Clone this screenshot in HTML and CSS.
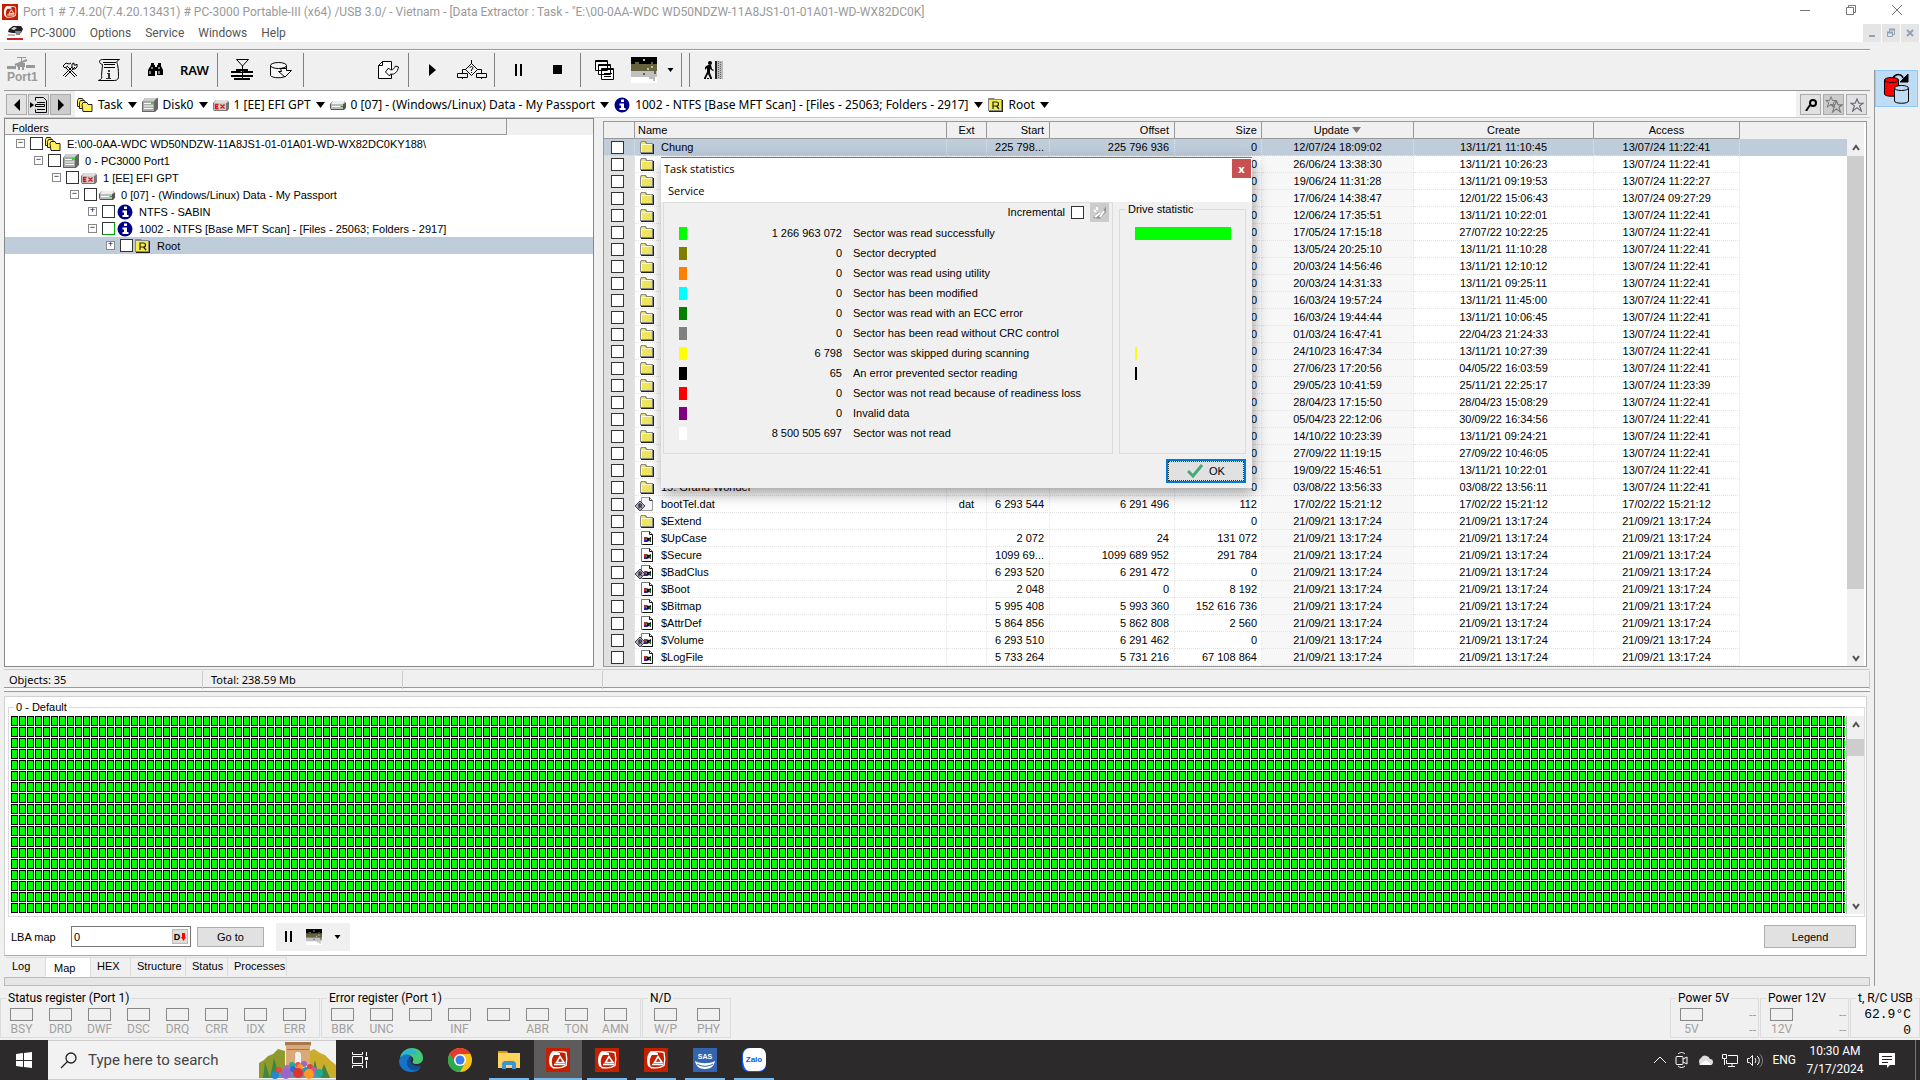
FILE: index.html
```html
<!DOCTYPE html>
<html lang="en">
<head>
<meta charset="utf-8">
<title>PC-3000 Portable-III - Data Extractor</title>
<link rel="stylesheet" href="styles.css">
</head>
<body>
<svg class="sprite" aria-hidden="true">
  <symbol id="i-logo" viewBox="0 0 24 24"><path fill="#c42000" d="M0 0h24v24H0z"/><path d="M7 4.500c4-1 9-1 13 0 1 4 1 8 0 13-3 2-8 3-13 2" fill="none" stroke="#fff" stroke-width="1.300"/><path d="M7 3C3 6 2 12 4 18l4 3c-3-5-3-10 0-14h6V5z" fill="#fff"/><path d="M10.500 14.500L14 8.500l4 6zM8 16.500h11" fill="none" stroke="#fff" stroke-width="1.500"/></symbol>
  <symbol id="i-stack" viewBox="0 0 16 16"><g fill="#ffef5a" stroke="#222"><path d="M.5 3.500l1-2h4l1 2v6h-6z"/><path d="M2.500 5.500l1-2h4l1 2v6h-6z"/><path d="M5 7.500l1-2h4l1 2h4v7H6z"/></g></symbol>
  <symbol id="i-disk" viewBox="0 0 16 16"><path d="M3 1h13v11l-3 3H0V5z" fill="#666"/><path d="M3 1h12l-3 3H1z" fill="#ccc"/><path d="M1 4h11v10H1z" fill="#aaa"/><path d="M2 6.500h9M2 9h9M2 11.500h9" stroke="#fff"/><path d="M9 5h3v2H9z" fill="#2d2"/></symbol>
  <symbol id="i-drive" viewBox="0 0 16 16"><path d="M3 4h11l2 2v5l-2 2H1l-1-2V7z" fill="#555"/><path d="M3 4h11l1 2-2 1H1z" fill="#eee"/><path d="M1 7h12v5H1z" fill="#bbb"/><path d="M2 9.500h8" stroke="#fff"/><path d="M11 9h2v1h-2z" fill="#2a2"/></symbol>
  <symbol id="i-ex" viewBox="0 0 16 16"><path d="M3 3h11l2 2v7l-2 2H1l-1-2V6z" fill="#777"/><path d="M3 3h11l1 2-2 1H1z" fill="#ddd"/><path d="M1 6h12v7H1z" fill="#ccc"/><path d="M5.500 7.500h-3v4h3m-3-2h2.500M7.500 7.500l4 4m0-4l-4 4" stroke="#e01010" fill="none" stroke-width="1.300"/></symbol>
  <symbol id="i-info" viewBox="0 0 16 16"><circle cx="8" cy="8" r="7.500" fill="#000088"/><path d="M7 2.500h3v2.500H7zM5.500 6.500H10V11h1.500v2h-6v-2H7V8.500H5.500z" fill="#fff"/></symbol>
  <symbol id="i-rfolder" viewBox="0 0 16 16"><path d="M1 2h5l1 1h8v12H1z" fill="#222"/><path d="M0 1h6l1 1h7v12H0z" fill="#888"/><path d="M1 3h12v10H1z" fill="#f3ec4a"/><path d="M5 12V5h3.500a1.500 1.500 0 0 1 0 4H5m3.500 0L11 12" fill="none" stroke="#222" stroke-width="1.200"/></symbol>
  <symbol id="i-folder" viewBox="0 0 14 14"><path d="M1 2h5l1 2h7v10H1z" fill="#222"/><path d="M0 3l1-2h5l1 2h6v10H0z" fill="#888"/><path d="M1 3l1-1h3l1 2h6v8H1z" fill="#eee660"/><path d="M1.500 12V4.500h10" stroke="#fffbd0" fill="none"/></symbol>
  <symbol id="i-file" viewBox="0 0 14 14"><path d="M1.500.5h8l3 3v10h-11z" fill="#f4f4f8" stroke="#999"/><path d="M9.500.5v3h3" fill="none" stroke="#333"/></symbol>
  <symbol id="i-sys" viewBox="0 0 14 14"><path d="M1.500.5h8l3 3v10h-11z" fill="#fff" stroke="#777"/><path d="M9.500.5v3h3v10h-10" fill="none" stroke="#111"/><path d="M4 6h2v3H4z" fill="#c22"/><path d="M6 6l3 1 2-1v5l-2-1-2 1z" fill="#111"/><path d="M4 9h3v2H4z" fill="#22b"/><path d="M9 8h2v2H9z" fill="#161"/></symbol>
  <symbol id="i-flag" viewBox="0 0 10 10"><path d="M5 0l5 5-5 5-5-5z" fill="#aab" stroke="#223" stroke-width=".8"/><path d="M4 7.500V3h1.500a1 1 0 0 1 0 2H4m1.500 0l1 2" fill="none" stroke="#112"/></symbol>
  <symbol id="i-noise" viewBox="0 0 26 26"><path fill="#000" d="M0 0h26v8H0z"/><path fill="#66623e" d="M0 7h26v8H0z"/><path fill="#c0c0c0" d="M0 14h26v7H0z"/><path fill="#fff" d="M0 20h26v6H0z"/><path fill="#bbb" d="M12 2h2v2h-2zM20 9h2v2h-2zM16 11h2v2h-2zM18 20h6v2h-6zM22 22h2v2h-2z"/><path fill="#66623e" d="M12 16h2v2h-2zM23 14h2v3h-2zM4 5h4v2H4zM20 5h2v2h-2z"/></symbol>
  <symbol id="i-arrow" viewBox="0 0 9 6"><path d="M0 0h9L4.500 6z"/></symbol>
  <symbol id="i-up" viewBox="0 0 8 8"><path d="M1 6l3-4 3 4" fill="none" stroke="#505050" stroke-width="2"/></symbol>
  <symbol id="i-down" viewBox="0 0 8 8"><path d="M1 2l3 4 3-4" fill="none" stroke="#505050" stroke-width="2"/></symbol>
  <symbol id="i-star" viewBox="0 0 16 16"><path d="M8 1l2 5h5l-4 3 2 6-5-4-5 4 2-6-4-3h5z" fill="none" stroke="currentColor" stroke-width="1.300"/></symbol>
</svg>

<header class="titlebar">
  <svg class="title-logo"><use href="#i-logo"/></svg>
  <h1>Port 1 # 7.4.20(7.4.20.13431) # PC-3000 Portable-III (x64) /USB 3.0/ - Vietnam - [Data Extractor : Task - "E:\00-0AA-WDC WD50NDZW-11A8JS1-01-01A01-WD-WX82DC0K]</h1>
  <div class="window-buttons">
    <button aria-label="Minimize"><svg width="10" height="10"><path d="M0 5.500h10" stroke="#777"/></svg></button>
    <button aria-label="Restore"><svg width="10" height="10"><path d="M.5 2.500h7v7h-7zM2.500 2.500v-2h7v7h-2" fill="none" stroke="#777"/></svg></button>
    <button aria-label="Close"><svg width="10" height="10"><path d="M0 0l10 10M10 0L0 10" stroke="#777"/></svg></button>
  </div>
</header>
<nav class="menubar">
  <svg class="menu-logo" viewBox="0 0 16 14"><path d="M2 3l4-3h8l2 3-2 4H5L1 6z" fill="#222"/><path d="M4 3l3-2 3 1-3 2z" fill="#ddd"/><path d="M8 5h6l-1 4H9z" fill="#888"/><path d="M1 8h7v2H1z" fill="#bbb"/><path d="M0 12h16v2H0z" fill="#d02020"/></svg>
  <a href="#">PC-3000</a><a href="#">Options</a><a href="#">Service</a><a href="#">Windows</a><a href="#">Help</a>
  <div class="mdi-buttons">
    <button aria-label="Minimize document"><svg width="8" height="10"><path d="M1 8h6" stroke="#8fa3b8" stroke-width="2"/></svg></button>
    <button aria-label="Restore document"><svg width="8" height="10"><path d="M.5 4.500h5v4h-5zM2.500 4V1.500h5v5H6" fill="none" stroke="#8fa3b8"/><path d="M0 4.500h6M2 1.500h6" stroke="#8fa3b8" stroke-width="2"/></svg></button>
    <button aria-label="Close document"><svg width="8" height="10"><path d="M1 2l6 6M7 2L1 8" stroke="#8fa3b8" stroke-width="2"/></svg></button>
  </div>
</nav>

<div class="workspace">
<main class="main">
  <div class="toolbar">
    <div class="port"><svg width="28" height="13"><path d="M0 9h9v3H0zM19 8h9v3h-9zM10 0h9v1h-9zM14 1h1v4h-1zM10 6h8v4h-8z" fill="#999"/><path d="M8 8l12-5M12 9v4M16 9v4" stroke="#999" stroke-width="2"/></svg><span>Port1</span></div>
    <div class="tools">
      <button aria-label="Tools"><svg width="16" height="16" fill="none" stroke="#000"><path d="M1 4l3-3 3 1 2-1M4 6l9 9M5 4l10 10M3 15L13 5M1 14l9-9M10 5V2l2-1v2h2l1-1v3l-2 2h-2zM1 4l2 2 3-2"/></svg></button>
      <button aria-label="Task information"><svg width="22" height="22" fill="none" stroke="#000"><path d="M4.500 5.500c-4-1-4-5 0-5h17c-3 1-3 3-2 5 1 5 1 9 1 12 0 2-1 4-4 4H.5c3-1 4-3 3-5z"/><path d="M5 3.500h13M6 5.500h11M6 8.500h11"/><path d="M10 11h2v2h-2zM9 14h3v5h1v1H8v-1h2v-4H9z" fill="#333" stroke="none"/></svg></button>
    </div>
    <div class="tools">
      <button aria-label="Find"><svg width="16" height="14"><path d="M3 0h3v2h1v2h2V2h1V0h3v3l2 4v5H9V8H7v5H0V7l3-5z"/><path d="M2 8v3M4 4v2M11 8v3M11 4v2" stroke="#fff"/></svg></button>
      <button class="raw">RAW</button>
    </div>
    <div class="tools">
      <button aria-label="Compact"><svg width="22" height="22"><path d="M5.500.5h12L11.500 7z" fill="none" stroke="#000"/><path d="M11 7h1v13h-1zM0 12h9l2 1 2-1h9v2H0zM0 16h22v2H0zM3 19h16v2H3zM5 10h12v2H5z"/></svg></button>
      <button aria-label="Export data"><svg width="22" height="17" fill="#f8f8f8" stroke="#000"><path d="M.5 3.500v10c2 3 13 3 16 0v-10"/><ellipse cx="8.500" cy="3.500" rx="8" ry="3"/><path d="M10.500 6.500h6v2h5L15 15 8.500 9.500h3z"/></svg></button>
    </div>
    <div class="tools tools-end">
      <button aria-label="Open report"><svg width="21" height="18" fill="#fff" stroke="#000"><path d="M.5 4.500l4-4h9v17H.5z"/><path d="M.5 4.500h4v-4" fill="none"/><path d="M7.500 11l3-4 2 2c3 0 4-2 5-4l3 1c-1 5-4 8-8 7l-1 2z"/></svg></button>
    </div>
    <div class="tools">
      <button aria-label="Start"><svg width="7" height="12"><path d="M0 0l7 6-7 6z"/></svg></button>
      <button aria-label="Algorithm"><svg width="30" height="20" fill="none" stroke="#000"><path d="M14.500 0v4M14.500 3.500l6 6-6 6-6-6zM9 9.500H5.500v4M20 9.500h4.500v4M.5 13.500h10v4H.5zM19.500 13.500h10v4h-10zM5.500 17v2M24.500 17v2"/><path d="M13 8c0-2 3-2 3 0l-1.500 2v1M14.500 12v1"/></svg></button>
    </div>
    <div class="tools">
      <button aria-label="Pause"><svg width="8" height="12"><path d="M0 0h2v12H0zM5 0h2v12H5z"/></svg></button>
      <button aria-label="Stop"><svg width="10" height="10"><path d="M0 0h9v9H0z"/></svg></button>
    </div>
    <div class="tools">
      <button aria-label="Windows"><svg width="20" height="20" fill="#fff" stroke="#000"><path d="M.5.5h12v10H.5zM3.500 4.500h12v10h-12zM6.500 8.500h12v11h-12z"/><path d="M1 1.500h12M4 5.500h12M7 9.500h12M9 13.500h8M9 16.500h7"/></svg></button>
      <button aria-label="Map view"><svg width="26" height="26"><use href="#i-noise"/></svg></button>
      <button class="drop" aria-label="Map view options"><svg width="7" height="4"><use href="#i-arrow"/></svg></button>
    </div>
    <div class="tools">
      <button aria-label="Exit"><svg width="20" height="18"><circle cx="6" cy="2" r="2"/><path d="M4 4h3l1 4 2 1-1 1-3-2v4l2 5H6l-2-4-2 4H0l3-6V7L1 9V6z"/><path d="M11 0h2v18h-2z" fill="#222"/><path d="M13 0h6v18h-6z" fill="#bbb"/><path d="M14.500 0v18M16.500 1v17" stroke="#666" stroke-dasharray="1 1"/><path d="M0 17.500h9" stroke="#000" stroke-dasharray="2 1"/></svg></button>
    </div>
  </div>

  <div class="navbar">
    <div class="history">
      <button aria-label="Back"><svg width="6" height="12"><path d="M6 0v12L0 6z"/></svg></button>
      <button aria-label="Up to list"><svg width="17" height="16" fill="none" stroke="#000"><path d="M5.500 3.500v-3h8l3 3v12h-11v-3M7 5.500h8M5.500 7.500h9v2h-9zM7 12.500h8"/><path d="M0 5v6l4-3z" fill="#000" stroke="none"/></svg></button>
      <button class="pressed" aria-label="Forward"><svg width="6" height="12"><path d="M0 0v12l6-6z"/></svg></button>
    </div>
    <div class="crumbs">
      <a href="#"><svg class="ic"><use href="#i-stack"/></svg>Task<svg class="ar"><use href="#i-arrow"/></svg></a>
      <a href="#"><svg class="ic"><use href="#i-disk"/></svg>Disk0<svg class="ar"><use href="#i-arrow"/></svg></a>
      <a href="#"><svg class="ic"><use href="#i-ex"/></svg>1 [EE] EFI GPT<svg class="ar"><use href="#i-arrow"/></svg></a>
      <a href="#"><svg class="ic"><use href="#i-drive"/></svg>0 [07] - (Windows/Linux) Data - My Passport<svg class="ar"><use href="#i-arrow"/></svg></a>
      <a href="#"><svg class="ic"><use href="#i-info"/></svg>1002 - NTFS [Base MFT Scan] - [Files - 25063; Folders - 2917]<svg class="ar"><use href="#i-arrow"/></svg></a>
      <a href="#"><svg class="ic"><use href="#i-rfolder"/></svg>Root<svg class="ar"><use href="#i-arrow"/></svg></a>
    </div>
    <div class="finders">
      <button aria-label="Search"><svg width="12" height="12" fill="none" stroke="#000" stroke-width="2"><circle cx="8" cy="4" r="3"/><path d="M5 6l-4 6"/></svg></button>
      <button class="pressed" aria-label="All favourites"><svg width="18" height="17" color="#777"><use href="#i-star" width="12" height="12"/><use href="#i-star" x="5" y="4" width="13" height="13"/></svg></button>
      <button aria-label="Favourites"><svg width="14" height="14" color="#667"><use href="#i-star"/></svg></button>
    </div>
  </div>

  <div class="split">
    <section class="folders">
      <h2>Folders</h2>
      <ul class="tree">
        <li class="d0"><i class="ex">−</i><input type="checkbox" id="t0"><label for="t0"><svg class="ic"><use href="#i-stack"/></svg>E:\00-0AA-WDC WD50NDZW-11A8JS1-01-01A01-WD-WX82DC0KY188\</label></li>
        <li class="d1"><i class="ex">−</i><input type="checkbox" id="t1"><label for="t1"><svg class="ic"><use href="#i-disk"/></svg>0 - PC3000 Port1</label></li>
        <li class="d2"><i class="ex">−</i><input type="checkbox" id="t2"><label for="t2"><svg class="ic"><use href="#i-ex"/></svg>1 [EE] EFI GPT</label></li>
        <li class="d3"><i class="ex">−</i><input type="checkbox" id="t3"><label for="t3"><svg class="ic"><use href="#i-drive"/></svg>0 [07] - (Windows/Linux) Data - My Passport</label></li>
        <li class="d4"><i class="ex">+</i><input type="checkbox" id="t4"><label for="t4"><svg class="ic"><use href="#i-info"/></svg>NTFS - SABIN</label></li>
        <li class="d4"><i class="ex">−</i><input type="checkbox" class="part" id="t5"><label for="t5"><svg class="ic"><use href="#i-info"/></svg>1002 - NTFS [Base MFT Scan] - [Files - 25063; Folders - 2917]</label></li>
        <li class="d5 selected"><i class="ex">+</i><input type="checkbox" id="t6"><label for="t6"><svg class="ic"><use href="#i-rfolder"/></svg>Root</label></li>
      </ul>
    </section>

    <section class="files">
      <table>
        <colgroup><col class="c-check"><col class="c-name"><col class="c-ext"><col class="c-start"><col class="c-offset"><col class="c-size"><col class="c-update"><col class="c-create"><col class="c-access"><col></colgroup>
        <thead><tr><th></th><th class="l">Name</th><th>Ext</th><th class="r">Start</th><th class="r">Offset</th><th class="r size">Size</th><th>Update <svg class="ar sort"><use href="#i-arrow"/></svg></th><th>Create</th><th>Access</th><th></th></tr></thead>
        <tbody id="rows"></tbody>
      </table>
      <div class="scroll"><button aria-label="Scroll up"><svg><use href="#i-up"/></svg></button><div class="thumb tall"></div><button aria-label="Scroll down"><svg><use href="#i-down"/></svg></button></div>

      <div class="dialog" role="dialog" aria-label="Task statistics">
        <div class="dialog-title"><span>Task statistics</span><button aria-label="Close">x</button></div>
        <a class="dialog-menu" href="#">Service</a>
        <div class="dialog-body">
          <div class="stats">
            <div class="incremental"><label for="inc">Incremental</label><input type="checkbox" id="inc"><button aria-label="Clear"><svg width="15" height="15"><path d="M1 13l5-6 3 2 5-8v6l-6 7z" fill="#999"/><path d="M2 5l2 2M5 2v3M8 12l4-6M3 12l5-4" stroke="#fff" stroke-width="2"/></svg></button></div>
            <dl id="stats"></dl>
          </div>
          <fieldset class="drive"><legend>Drive statistic</legend><div id="bars"></div></fieldset>
        </div>
        <div class="dialog-foot"><button class="ok"><svg width="16" height="14"><path d="M1 7l5 5 9-11" fill="none" stroke="#4aa878" stroke-width="3"/></svg>OK</button></div>
      </div>
    </section>
  </div>

  <div class="status"><span>Objects: 35</span><span>Total: 238.59 Mb</span><span></span><span></span></div>

  <section class="mapview">
    <fieldset class="map">
      <legend>0 - Default</legend>
      <svg class="cells" aria-label="Sector map"><defs><pattern id="cell" width="8" height="11" patternUnits="userSpaceOnUse"><path d="M0 0h7v10H0z"/><path d="M1 1h5v8H1z" fill="#00ff00"/></pattern></defs><rect width="100%" height="100%" fill="url(#cell)"/></svg>
      <div class="scroll"><button aria-label="Scroll up"><svg><use href="#i-up"/></svg></button><div class="thumb"></div><button aria-label="Scroll down"><svg><use href="#i-down"/></svg></button></div>
    </fieldset>
    <div class="mapbar">
      <label for="lba">LBA map</label>
      <div class="lba"><input type="text" id="lba" value="0"><button aria-label="Decimal">D<svg width="5" height="8"><path d="M1 0h3v4h1L2.500 8 0 4h1z" fill="#f00"/></svg></button></div>
      <button class="btn goto">Go to</button>
      <div class="mini">
        <button aria-label="Pause map"><svg width="8" height="11"><path d="M0 0h2v11H0zM5 0h2v11H5z"/></svg></button>
        <button aria-label="Map colours"><svg width="16" height="16"><use href="#i-noise"/></svg></button>
        <button aria-label="Map colour options"><svg width="7" height="4"><use href="#i-arrow"/></svg></button>
      </div>
      <button class="btn legend">Legend</button>
    </div>
  </section>
  <div class="tabs" role="tablist">
    <button role="tab" class="t-log">Log</button><button role="tab" class="t-map active" aria-selected="true">Map</button><button role="tab" class="t-log">HEX</button><button role="tab" class="t-str">Structure</button><button role="tab" class="t-sta">Status</button><button role="tab" class="t-pro">Processes</button>
  </div>
  <div class="progress"></div>
</main>
<aside class="side">
  <button aria-label="Copy task"><svg width="26" height="32" stroke="#000"><path d="M.5 7v14c0 3 14 3 14 0V7" fill="#f00"/><ellipse cx="7.500" cy="7" rx="7" ry="2.500" fill="#f00"/><path d="M10.500 15v13c0 3 14 3 14 0V15" fill="#bfdcf5"/><ellipse cx="17.500" cy="15" rx="7" ry="2.500" fill="#bfdcf5"/><path d="M9 5c3-5 9-4 10 0" fill="none" stroke-width="1.500"/><path d="M24 1v8h-8z"/></svg></button>
</aside>
</div>

<section class="registers">
  <fieldset class="reg"><legend>Status register (Port 1)</legend><div class="leds"><span>BSY</span><span>DRD</span><span>DWF</span><span>DSC</span><span>DRQ</span><span>CRR</span><span>IDX</span><span>ERR</span></div></fieldset>
  <fieldset class="reg"><legend>Error register (Port 1)</legend><div class="leds"><span>BBK</span><span>UNC</span><span></span><span>INF</span><span></span><span>ABR</span><span>TON</span><span>AMN</span></div></fieldset>
  <fieldset class="reg nd"><legend>N/D</legend><div class="leds"><span>W/P</span><span>PHY</span></div></fieldset>
  <fieldset class="power first"><legend>Power 5V</legend><div class="leds"><span>5V</span><em>--<br>--</em></div></fieldset>
  <fieldset class="power"><legend>Power 12V</legend><div class="leds"><span>12V</span><em>--<br>--</em></div></fieldset>
  <fieldset class="temp"><legend>t, R/C USB</legend><output>62.9°C<br>0</output></fieldset>
</section>

<footer class="taskbar">
  <button class="start" aria-label="Start"><svg width="16" height="16" fill="#fff"><path d="M0 2l7-1v7H0zM8 1l8-1v8H8zM0 9h7v6l-7-1zM8 9h8v7l-8-1z"/></svg></button>
  <label class="search"><svg width="17" height="17" fill="none" stroke="#222" stroke-width="1.300"><circle cx="11" cy="6" r="5"/><path d="M7.500 9.500L1 16"/></svg><input type="text" placeholder="Type here to search">
    <svg class="scene" width="77" height="38" viewBox="0 0 77 38"><path d="M0 37V22l5-3 4-4 5-2 5-5 7 2v27z" fill="#8f9a2c"/><path d="M77 37V24l-5-4-6-6-5-2-6-4-4 2v27z" fill="#c9ad2b"/><path d="M4 37l2-16 5 16 4-20 6 20zM52 37l4-18 4 18 5-14 6 14z" fill="#3c8743"/><path d="M26 1h26v4h-1v20h-9V14c0-4-6-4-6 0v11h-9V5h-1z" fill="#dba878"/><path d="M26 1h26v3H26zM28 8h22v1H28z" fill="#a87750"/><path d="M36 14c0-4 6-4 6 0v11h-6z" fill="#f0f0f4"/><path d="M18 37c4-14 36-14 44 0z" fill="#6d8db0"/><circle cx="33" cy="24" r="3" fill="#2a9"/><circle cx="39" cy="24" r="3" fill="#d55"/><circle cx="45" cy="23" r="3" fill="#96c"/><circle cx="51" cy="26" r="3" fill="#d44"/><circle cx="28" cy="27" r="3" fill="#a6c"/><circle cx="20" cy="29" r="3" fill="#e44"/><circle cx="41" cy="26" r="3" fill="#f92"/><circle cx="34" cy="28" r="3" fill="#36c"/><circle cx="47" cy="29" r="3" fill="#29a"/><circle cx="55" cy="29" r="3" fill="#c5a"/><circle cx="16" cy="34" r="4" fill="#28c"/><circle cx="27" cy="33" r="5" fill="#96c"/><circle cx="39" cy="32" r="5" fill="#d33"/><circle cx="50" cy="33" r="5" fill="#f92"/><circle cx="60" cy="32" r="4" fill="#2a9"/></svg></label>
  <button class="view" aria-label="Task view"><svg width="17" height="16" fill="none" stroke="#fff"><path d="M.5 0v2.500h10V0M.5 4.500h10v7H.5zM.5 16v-2.500h10V16M14.500 0v4M14.500 9v7"/><path d="M13 5h3v3h-3z" fill="#fff" stroke="none"/></svg></button>
  <div class="apps">
    <button aria-label="Edge"><svg viewBox="0 0 24 24"><path d="M1 9C3 3 8 0 13 0c6 0 11 4 11 10 0 4-3 6-7 6-3 0-4-1-3-3 2-5-5-8-13-4z" fill="#45c878"/><path d="M1 10C3 4 8 1 13 1c3 1 5 3 5 6-4-2-13-1-17 3z" fill="#2cb5d8"/><path d="M0 13c1-6 8-8 12-5-4 2-5 9-1 12 3 3 8 2 11-1-2 4-6 5-10 5C5 24 0 19 0 13z" fill="#1673c8"/><path d="M8 15c0-4 2-6 5-6-4 5 1 10 9 9-3 7-14 5-14-3z" fill="#124e93"/></svg></button>
    <button aria-label="Chrome"><svg viewBox="0 0 24 24"><circle cx="12" cy="12" r="12" fill="#fbc116"/><path d="M1.600 6A12 12 0 0 1 22.400 6H12L7 15z" fill="#e33b2e"/><path d="M1.600 6A12 12 0 0 0 12 24l5-9-9 0z" fill="#2da94f"/><circle cx="12" cy="12" r="6" fill="#fff"/><circle cx="12" cy="12" r="4.500" fill="#3b7ded"/></svg></button>
    <button class="open" aria-label="File Explorer"><svg viewBox="0 0 24 24"><path d="M1 3h9l2 3H1z" fill="#d99a10"/><path d="M1 5h22v15H1z" fill="#ffd35c"/><path d="M5 21v-6l2-2h10l2 2v6h-4v-4H9v4z" fill="#3f93d8"/></svg></button>
    <button class="open active" aria-label="PC-3000"><svg><use href="#i-logo"/></svg></button>
    <button class="open" aria-label="PC-3000 window 2"><svg><use href="#i-logo"/></svg></button>
    <button class="open" aria-label="PC-3000 window 3"><svg><use href="#i-logo"/></svg></button>
    <button class="open" aria-label="SAS"><svg viewBox="0 0 24 24"><path d="M0 0h24v24H0z" fill="#3464b0"/><path d="M2 13c5 3 15 3 20 0-1 5-4 8-10 8S3 18 2 13z" fill="#fff"/><path d="M4 16c5 3 11 3 16 0" stroke="#3464b0" fill="none"/><text x="12" y="11" font-size="7" text-anchor="middle">SAS</text></svg></button>
    <button class="open" aria-label="Zalo"><svg viewBox="0 0 24 24"><rect width="24" height="24" rx="7" fill="#0a5cf0"/><path d="M8 0h9c5 0 7 3 7 8v7c0 5-3 8-8 8H8c-3 0-5-2-6-5 0-2-1-3-1-5V8c0-5 3-8 7-8z" fill="#fff"/><text class="zalo" x="12" y="14" font-size="8" text-anchor="middle">Zalo</text></svg></button>
  </div>
  <div class="tray">
    <svg width="12" height="16" fill="none" stroke="#fff"><path d="M0 11l6-6 6 6"/></svg>
    <svg width="13" height="16" fill="none" stroke="#fff"><rect x="1" y="4.500" width="7" height="8" rx="1"/><path d="M8 7l4-2v7l-4-2M3 2c2-2 5-2 7 0M3 14c2 2 5 2 7 0"/></svg>
    <svg width="16" height="16"><path d="M4 13a4 4 0 0 1 0-7 5 5 0 0 1 9 1 3 3 0 0 1 0 6z" fill="#ddd"/><path d="M2 13l7-5 6 5z" fill="#fff"/></svg>
    <svg width="16" height="16" fill="none" stroke="#fff"><path d="M6 3.500h9.500v8H4.500V8M10 12v3M6 14.500h7M.5 2.500h4v4h-4zM2.500 6v7"/></svg>
    <svg width="16" height="16" fill="none" stroke="#fff"><path d="M.5 6.500h2l3-3v10l-3-3h-2zM8 6c1 1 1 4 0 5M10 4c3 2 3 7 0 9"/><path d="M12.500 2c4 3 4 10 0 13" stroke="#888"/></svg>
    <span class="lang">ENG</span>
    <time>10:30 AM<br>7/17/2024</time>
    <svg class="note" width="16" height="16"><path d="M0 1h16v12h-5l-3 3v-3H0z" fill="#fff"/><path d="M3 4.500h10M3 7.500h10M3 10.500h6" stroke="#222"/></svg>
  </div>
</footer>
<script src="script.js"></script>
</body>
</html>
```

FILE: styles.css
```css
* { box-sizing: border-box; }
body {
  margin: 0; min-height: 100vh; display: flex; flex-direction: column;
  background: #f0f0f0; color: #000;
  font: 11px/14px "Liberation Sans", Arial, sans-serif;
}
h1, h2, ul, dl, dd, dt { margin: 0; padding: 0; font: inherit; }
fieldset { min-width: 0; margin: 0; padding: 0; border: 1px solid #dcdcdc; }
legend { padding: 0 2px; line-height: 14px; }
button, input { font: inherit; color: inherit; margin: 0; padding: 0; }
button { border: 0; background: none; display: flex; align-items: center; justify-content: center; flex: none; }
svg { flex: none; display: block; }
a { color: inherit; text-decoration: none; }
.sprite { position: absolute; width: 0; height: 0; }
.ic { width: 16px; height: 16px; }
.ar { width: 9px; height: 6px; }
input[type=checkbox] {
  appearance: none; width: 13px; height: 13px; flex: none;
  background: #fff; border: 1px solid #333;
}

.titlebar, .menubar { display: flex; align-items: center; background: #fff; font: 12px/16px Roboto, sans-serif; }
.titlebar { height: 23px; padding-left: 2px; color: #999; }
.title-logo { width: 16px; height: 16px; margin-right: 5px; }
.titlebar h1 { flex: 1; white-space: nowrap; overflow: hidden; }
.window-buttons { display: flex; padding-bottom: 3px; }
.window-buttons button { width: 46px; height: 20px; }
.menubar { height: 19px; padding-left: 7px; color: #555; gap: 14px; }
.menu-logo { width: 16px; height: 14px; margin-right: -7px; }
.mdi-buttons { display: flex; gap: 1px; margin-left: auto; padding-right: 1px; }
.mdi-buttons button { width: 18px; height: 18px; background: #e5e5e5; }

.workspace { display: flex; }
.main { flex: 1; min-width: 0; padding: 7px 0 0 4px; }
.toolbar { display: flex; align-items: center; height: 42px; border: solid #999; border-width: 1px 0; box-shadow: inset 0 1px #fff; }
.port { width: 41px; padding-left: 3px; color: #999; font: bold 12px/14px "Liberation Sans", sans-serif; }
.tools { display: flex; height: 34px; padding: 0 3px 0 4px; border-left: 1px solid #808080; }
.tools button { width: 39px; }
.tools .drop { width: 15px; }
.tools:nth-last-child(2) { border-right: 1px solid #808080; margin-right: 7px; padding-right: 3px; }
.tools-end { padding-left: 65px; padding-right: 0; }
.tools .raw { font: 600 13px/16px "Noto Sans", sans-serif; }

.navbar { display: flex; height: 27px; border-bottom: 1px solid #ccc; }
.history, .finders { display: flex; align-items: center; gap: 1px; padding: 1px 4px 0 2px; }
.history button, .finders button { width: 21px; height: 21px; border: 1px solid #aaa; background: #e1e1e1; }
.history .pressed, .finders .pressed { background: #ccc; }
.finders { padding: 1px 3px 0 4px; gap: 2px; }
.crumbs { flex: 1; display: flex; align-items: center; gap: 5px; padding: 1px 0 0 2px; background: #fff; font: 12px/16px "Noto Sans", sans-serif; overflow: hidden; white-space: nowrap; }
.crumbs a { display: flex; align-items: center; gap: 5px; }

.split { display: flex; }
.folders { width: 590px; border: 1px solid #888; margin-right: 9px; background: linear-gradient(#f0f0f0 16px, #fff 16px); }
.folders h2 { width: 502px; height: 16px; padding-left: 7px; border: solid #999; border-width: 0 1px 1px 0; line-height: 18px; }
.tree { list-style: none; }
.tree li { display: flex; align-items: center; height: 17px; white-space: nowrap; }
.tree label { display: flex; align-items: center; gap: 6px; margin-left: 2px; }
.ex { width: 9px; height: 9px; margin-right: 5px; border: 1px solid #888; font: 9px/7px "Liberation Mono", monospace; text-align: center; overflow: hidden; background: #fff; }
.tree .selected { background: #bfccda; }
.d0 { padding-left: 11px; } .d1 { padding-left: 29px; } .d2 { padding-left: 47px; }
.d3 { padding-left: 65px; } .d4 { padding-left: 83px; } .d5 { padding-left: 101px; }
.tree .part { border-right-color: #0a0; border-bottom-color: #0a0; }

.files { position: relative; flex: 1; min-width: 0; margin: 3px 3px 0 0; padding-right: 2px; display: flex; background: #fff; border: 1px solid #999; }
table { flex: 1; min-width: 0; table-layout: fixed; border-collapse: separate; border-spacing: 0; width: 100%; }
.c-check { width: 31px; } .c-name { width: 312px; } .c-ext { width: 40px; } .c-start { width: 63px; }
.c-offset { width: 125px; } .c-size { width: 87px; } .c-update { width: 152px; } .c-create { width: 180px; } .c-access { width: 146px; }
th, td { height: 17px; padding: 0 5px; overflow: hidden; white-space: nowrap; line-height: 16px; text-align: center; }
th { font-weight: normal; background: #f0f0f0; border: solid #999; border-width: 0 1px 1px 0; padding-top: 1px; line-height: 15px; }
th:last-child { border: 0; }
.l { text-align: left; padding-left: 3px; }
.r { text-align: right; }
.size { padding-right: 4px; }
.sort { display: inline-block; fill: #777; vertical-align: 1px; }
td { border: dotted #e4e4e4; border-width: 0 1px 1px 0; }
td:last-child { border: 0; }
td:first-child { background: #e0e0e0; }
td:nth-child(7) { background: #f7f7f7; }
tr.selected td { background: #bfccda; }
td input { display: block; margin: 0 2px; }
.name { display: flex; align-items: center; gap: 7px; position: relative; padding-left: 2px; height: 16px; }
.name svg { width: 14px; height: 14px; }
.name .flag { position: absolute; left: -3px; top: 5px; width: 10px; height: 10px; }

.scroll { width: 17px; flex: none; display: flex; flex-direction: column; background: #f0f0f0; }
.files .scroll { padding-top: 17px; }
.scroll button { width: 17px; height: 17px; }
.scroll button svg { width: 8px; height: 8px; }
.scroll button:last-child { margin-top: auto; }
.thumb { height: 17px; margin-top: 6px; background: #cdcdcd; }
.thumb.tall { height: 433px; margin-top: 0; }

.dialog { position: absolute; left: 57px; top: 35px; width: 591px; height: 331px; background: #f0f0f0; border-top: 1px solid #777; box-shadow: 2px 5px 14px rgba(0,0,0,.4); display: flex; flex-direction: column; }
.dialog-title { display: flex; justify-content: space-between; background: #fff; padding: 1px 1px 0 3px; font: 11px/20px "Open Sans", sans-serif; }
.dialog-title button { width: 19px; height: 19px; background: #c75050; color: #fff; font-weight: bold; }
.dialog-menu { background: #fff; padding: 5px 7px 4px; font: 11px/14px "Open Sans", sans-serif; }
.dialog-body { display: flex; gap: 6px; padding: 0 6px 0 2px; }
.stats { width: 450px; height: 252px; border: 1px solid #dcdcdc; }
.incremental { display: flex; justify-content: flex-end; align-items: center; gap: 6px; height: 18px; padding-right: 3px; }
.incremental button { width: 19px; height: 19px; background: #ccc; }
dl > div { display: flex; align-items: center; height: 20px; padding-left: 15px; }
dl { padding-top: 2px; }
.swatch { width: 8px; height: 13px; }
dt { width: 155px; text-align: right; margin-right: 11px; }
.drive { flex: 1; }
.drive legend { margin-left: 6px; }
#bars { padding: 7px 0 0 15px; }
#bars div { height: 20px; display: flex; align-items: center; }
#bars i { height: 13px; }
.dialog-foot { display: flex; justify-content: flex-end; padding: 5px 6px; }
.ok { width: 80px; height: 24px; gap: 6px; border: 2px solid #0078d7; background: #e1e1e1; outline: 1px dotted #333; outline-offset: -3px; }

.status { display: grid; grid-template-columns: 199px 200px 200px 1fr; height: 23px; margin-top: 2px; padding: 2px 0 4px; border-bottom: 1px solid #999; box-shadow: inset 0 1px #ccc, inset 0 -3px #f8f8f8, inset 0 -4px #999; font: 11px/18px "Noto Sans", sans-serif; }
.status span { padding-left: 5px; border-right: 1px solid #ccc; }
.status span + span { padding-left: 8px; }

.mapview { margin: 4px 3px 0 0; background: #fff; border: 1px solid #d0d0d0; border-bottom-color: #aaa; padding: 3px 1px 0 3px; }
.map { position: relative; display: flex; padding: 2px 0 2px 2px; }
.map legend { margin-left: 3px; }
.cells { flex: 1; min-width: 0; height: 198px; margin-right: 1px; }
.map .scroll { border-left: 1px solid #bbb; width: 18px; }
.mapbar { display: flex; align-items: center; height: 38px; padding: 1px 0 0 3px; }
.mapbar > label { width: 60px; flex: none; white-space: nowrap; }
.lba { width: 120px; height: 21px; display: flex; align-items: center; padding: 0 2px; border: 1px solid #777; background: #fff; }
.lba input { flex: 1; min-width: 0; border: 0; outline: 0; }
.lba button { width: 16px; height: 15px; gap: 1px; background: #ddd; border: 1px solid #bbb; font-weight: bold; font-size: 9px; }
.btn { background: #e1e1e1; border: 1px solid #adadad; }
.goto { width: 67px; height: 20px; margin-left: 6px; }
.mini { display: flex; align-items: center; justify-content: space-between; width: 74px; height: 28px; margin-left: 12px; padding: 0 9px; background: #f0f0f0; }
.legend { width: 92px; height: 23px; margin: 0 9px 0 auto; }
.tabs { display: flex; height: 21px; padding-left: 2px; align-items: flex-end; }
.tabs button { height: 19px; margin-bottom: 1px; border: solid #dcdcdc; border-width: 1px 1px 0 0; justify-content: flex-start; padding: 0 0 3px 6px; }
.tabs .active { height: 20px; margin-bottom: 0; background: #fff; padding: 0 0 0 8px; }
.t-log { width: 40px; } .t-map { width: 45px; } .t-str { width: 55px; } .t-sta { width: 42px; } .t-pro { width: 59px; }
.progress { height: 9px; border: 1px solid #bcbcbc; background: #e6e6e6; }
.side { width: 46px; margin: 28px 0 0 4px; border-left: 1px solid #999; }
.side button { width: 43px; height: 37px; background: #bfdcf5; border: 1px solid #90c8f6; }

.registers { display: flex; margin-top: 5px; height: 48px; font: 12px/14px Roboto, sans-serif; }
.registers fieldset { height: 47px; margin-right: 1px; }
.registers legend { margin-left: 5px; white-space: nowrap; }
.leds { display: flex; padding: 3px 0 0 1px; color: #a0a0a0; }
.leds span { width: 39px; text-align: center; }
.leds span::before { content: ""; display: block; width: 21px; height: 11px; margin: 0 auto 1px; border: 1px solid #888; }
.reg { width: 320px; }
.registers .nd { width: 89px; }
.nd .leds span { width: 43px; }
.power { width: 89px; }
.first { margin-left: auto; }
.leds em { flex: 1; text-align: right; padding-right: 2px; font-style: normal; line-height: 15px; }
.registers .temp { width: 70px; margin-right: 0; }
.temp output { display: block; padding: 2px 8px 0 0; text-align: right; font: 13px/16px "Liberation Mono", monospace; }

.taskbar { display: flex; height: 40px; margin-top: auto; background: #2d2a2b; color: #fff; }
.start { width: 48px; }
.search { width: 288px; display: flex; align-items: center; padding-left: 12px; background: #f2f2f2; border: 1px solid #ccc; border-width: 1px 0; color: #333; }
.search input { flex: 1; min-width: 0; margin-left: 11px; border: 0; background: none; outline: 0; font: 15px/20px Roboto, sans-serif; }
.search input::placeholder { color: #444; opacity: 1; }
.view { width: 48px; }
.apps { display: flex; gap: 1px; margin-left: 3px; }
.apps button { width: 48px; position: relative; }
.apps svg { width: 24px; height: 24px; }
.apps .active { background: #5e5b5c; }
.open::after { content: ""; position: absolute; left: 4px; right: 4px; bottom: 0; height: 2px; background: #76b9ed; }
.active::after { left: 0; right: 0; }
.apps text { fill: #fff; font-family: "Liberation Sans", sans-serif; font-weight: bold; }
.apps .zalo { fill: #0a5cf0; }
.tray { display: flex; align-items: center; gap: 8px; margin-left: auto; margin-right: 4px; padding-right: 20px; border-right: 1px solid #777; font: 12px/18px Roboto, sans-serif; }
.tray svg { margin-right: 1px; }
.tray time { width: 62px; text-align: center; }
.tray .note { margin: 0 0 0 5px; }
```

FILE: script.js
```js
const ACC = "13/07/24 11:22:41", SYS = "21/09/21 13:17:24", DAT = "17/02/22 15:21:12";
// icon, flagged, name, ext, start, offset, size, update, create, access
const dir = (u, c, a = ACC, name = "") => ["folder", 0, name, "", "", "", "0", u, c, a];
const sys = (flag, name, start, offset, size) => ["sys", flag, name, "", start, offset, size, SYS, SYS, SYS];
const files = [
  ["folder", 0, "Chung", "", "225 798...", "225 796 936", "0", "12/07/24 18:09:02", "13/11/21 11:10:45", ACC],
  dir("26/06/24 13:38:30", "13/11/21 10:26:23"),
  dir("19/06/24 11:31:28", "13/11/21 09:19:53", "13/07/24 11:22:27"),
  dir("17/06/24 14:38:47", "12/01/22 15:06:43", "13/07/24 09:27:29"),
  dir("12/06/24 17:35:51", "13/11/21 10:22:01"),
  dir("17/05/24 17:15:18", "27/07/22 10:22:25"),
  dir("13/05/24 20:25:10", "13/11/21 11:10:28"),
  dir("20/03/24 14:56:46", "13/11/21 12:10:12"),
  dir("20/03/24 14:31:33", "13/11/21 09:25:11"),
  dir("16/03/24 19:57:24", "13/11/21 11:45:00"),
  dir("16/03/24 19:44:44", "13/11/21 10:06:45"),
  dir("01/03/24 16:47:41", "22/04/23 21:24:33"),
  dir("24/10/23 16:47:34", "13/11/21 10:27:39"),
  dir("27/06/23 17:20:56", "04/05/22 16:03:59"),
  dir("29/05/23 10:41:59", "25/11/21 22:25:17", "13/07/24 11:23:39"),
  dir("28/04/23 17:15:50", "28/04/23 15:08:29"),
  dir("05/04/23 22:12:06", "30/09/22 16:34:56"),
  dir("14/10/22 10:23:39", "13/11/21 09:24:21"),
  dir("27/09/22 11:19:15", "27/09/22 10:46:05"),
  dir("19/09/22 15:46:51", "13/11/21 10:22:01"),
  dir("03/08/22 13:56:33", "03/08/22 13:56:11", ACC, "15. Grand Wonder"),
  ["file", 1, "bootTel.dat", "dat", "6 293 544", "6 291 496", "112", DAT, DAT, DAT],
  dir(SYS, SYS, SYS, "$Extend"),
  sys(0, "$UpCase", "2 072", "24", "131 072"),
  sys(0, "$Secure", "1099 69...", "1099 689 952", "291 784"),
  sys(1, "$BadClus", "6 293 520", "6 291 472", "0"),
  sys(0, "$Boot", "2 048", "0", "8 192"),
  sys(0, "$Bitmap", "5 995 408", "5 993 360", "152 616 736"),
  sys(0, "$AttrDef", "5 864 856", "5 862 808", "2 560"),
  sys(1, "$Volume", "6 293 510", "6 291 462", "0"),
  sys(0, "$LogFile", "5 733 264", "5 731 216", "67 108 864"),
];
document.getElementById("rows").innerHTML = files.map(([icon, flag, name, ext, start, offset, size, u, c, a], i) => `
<tr${i ? "" : ' class="selected"'}><td><input type="checkbox" aria-label="Select row ${i + 1}"></td>
<td class="l"><div class="name"><svg><use href="#i-${icon}"/></svg>${flag ? '<svg class="flag"><use href="#i-flag"/></svg>' : ""}${name}</div></td>
<td>${ext}</td><td class="r">${start}</td><td class="r">${offset}</td><td class="r size">${size}</td>
<td>${u}</td><td>${c}</td><td>${a}</td><td></td></tr>`).join("");

// colour, sector count, meaning, bar width in the drive statistic
const stats = [
  ["#00ff00", "1 266 963 072", "Sector was read successfully", 96],
  ["#808000", "0", "Sector decrypted", 0],
  ["#ff8000", "0", "Sector was read using utility", 0],
  ["#00ffff", "0", "Sector has been modified", 0],
  ["#008000", "0", "Sector was read with an ECC error", 0],
  ["#808080", "0", "Sector has been read without CRC control", 0],
  ["#ffff00", "6 798", "Sector was skipped during scanning", 2],
  ["#000000", "65", "An error prevented sector reading", 2],
  ["#ff0000", "0", "Sector was not read because of readiness loss", 0],
  ["#800080", "0", "Invalid data", 0],
  ["#ffffff", "8 500 505 697", "Sector was not read", 0],
];
document.getElementById("stats").innerHTML = stats.map(([color, count, text]) =>
  `<div><i class="swatch" style="background:${color}"></i><dt>${count}</dt><dd>${text}</dd></div>`).join("");
document.getElementById("bars").innerHTML = stats.map(([color, , , width]) =>
  `<div><i style="width:${width}px;background:${color}"></i></div>`).join("");
```
